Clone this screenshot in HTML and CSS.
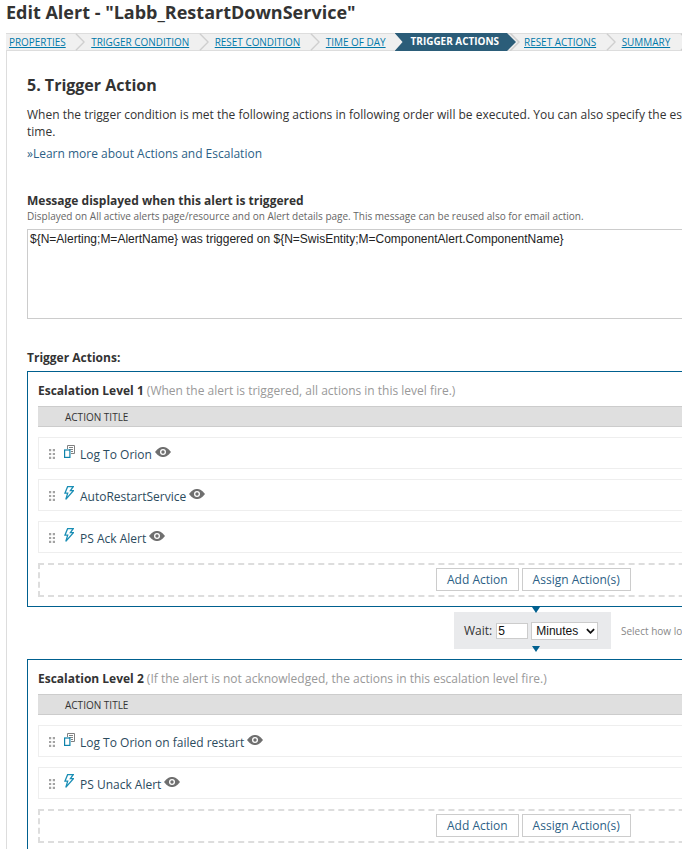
FILE: index.html
```html
<!DOCTYPE html>
<html lang="en">
<head>
<meta charset="utf-8">
<title>Edit Alert</title>
<link rel="stylesheet" href="styles.css">
</head>
<body>
<svg class="defs" width="0" height="0" aria-hidden="true">
  <defs>
    <symbol id="i-chev" viewBox="0 0 11 18"><path d="M1 0 L10 9 L1 18" fill="none" stroke="#cfcfcf" stroke-width="1.5"/></symbol>
    <symbol id="i-log" viewBox="0 0 11 13"><path d="M3.500 4V.5h7v8H7M5 2.500h4M5 4.500h4M7 6.500h2" fill="none" stroke="#808080" stroke-width="1"/><rect x=".6" y="5" width="5.300" height="7.400" fill="#fff" stroke="#0f83ab" stroke-width="1.200"/></symbol>
    <symbol id="i-bolt" viewBox="0 0 10 14"><path d="M3.600.7H9.200L6.400 4.700H9.400L1.800 13.400L3.700 7.200H.9Z" fill="none" stroke="#1a8eb5" stroke-width="1.300"/></symbol>
    <symbol id="i-eye" viewBox="0 0 16 10"><path d="M0 5C3 1 5.500 0 8 0s5 1 8 5c-3 4-5.500 5-8 5S3 9 0 5Z" fill="#6f6f6f"/><circle cx="8" cy="5" r="3" fill="#fff"/><circle cx="8" cy="5" r="1.700" fill="#6f6f6f"/></symbol>
    <symbol id="i-grip" viewBox="0 0 6 10"><path d="M0 0h2.200v2.200H0zM3.800 0H6v2.200H3.800zM0 3.900h2.200v2.200H0zM3.800 3.900H6v2.200H3.800zM0 7.800h2.200V10H0zM3.800 7.800H6V10H3.800z" fill="#a3a3a3"/></symbol>
  </defs>
</svg>
<div class="page">
  <h1 class="title">Edit Alert - "Labb_RestartDownService"</h1>
  <nav class="steps">
    <a class="step" href="#">Properties</a><svg class="chev"><use href="#i-chev"/></svg>
    <a class="step" href="#">Trigger Condition</a><svg class="chev"><use href="#i-chev"/></svg>
    <a class="step" href="#">Reset Condition</a><svg class="chev"><use href="#i-chev"/></svg>
    <a class="step" href="#">Time of Day</a>
    <span class="step-active">Trigger Actions</span><svg class="chev chev-after"><use href="#i-chev"/></svg>
    <a class="step" href="#">Reset Actions</a><svg class="chev"><use href="#i-chev"/></svg>
    <a class="step" href="#">Summary</a><svg class="chev"><use href="#i-chev"/></svg>
  </nav>
  <main class="panel">
    <h2 class="heading">5. Trigger Action</h2>
    <p class="intro">When the trigger condition is met the following actions in following order will be executed. You can also specify the escalation wait<br>time.</p>
    <p class="learn"><a href="#">»Learn more about Actions and Escalation</a></p>
    <h3 class="label msg-label">Message displayed when this alert is triggered</h3>
    <p class="hint">Displayed on All active alerts page/resource and on Alert details page. This message can be reused also for email action.</p>
    <div class="message">${N=Alerting;M=AlertName} was triggered on ${N=SwisEntity;M=ComponentAlert.ComponentName}</div>
    <h3 class="label actions-label">Trigger Actions:</h3>

    <section class="level">
      <div class="level-title"><b>Escalation Level 1</b> (When the alert is triggered, all actions in this level fire.)</div>
      <div class="col-head">Action Title</div>
      <div class="row"><svg class="grip"><use href="#i-grip"/></svg><svg class="ic-log"><use href="#i-log"/></svg><span class="name">Log To Orion</span><svg class="eye"><use href="#i-eye"/></svg></div>
      <div class="row"><svg class="grip"><use href="#i-grip"/></svg><svg class="ic-bolt"><use href="#i-bolt"/></svg><span class="name">AutoRestartService</span><svg class="eye"><use href="#i-eye"/></svg></div>
      <div class="row"><svg class="grip"><use href="#i-grip"/></svg><svg class="ic-bolt"><use href="#i-bolt"/></svg><span class="name">PS Ack Alert</span><svg class="eye"><use href="#i-eye"/></svg></div>
      <div class="add-zone"><button class="btn">Add Action</button><button class="btn">Assign Action(s)</button></div>
    </section>

    <div class="wait-line">
      <div class="wait">
        <i class="tri tri-top"></i>
        <label class="wait-label">Wait:</label>
        <span class="wait-input">5</span>
        <span class="wait-select">Minutes<svg class="caret" viewBox="0 0 10 6"><path d="M1 1l4 4 4-4" fill="none" stroke="#111" stroke-width="2"/></svg></span>
        <i class="tri tri-bottom"></i>
      </div>
      <span class="wait-hint">Select how long to wait before the next escalation level</span>
    </div>

    <section class="level">
      <div class="level-title"><b>Escalation Level 2</b> (If the alert is not acknowledged, the actions in this escalation level fire.)</div>
      <div class="col-head">Action Title</div>
      <div class="row"><svg class="grip"><use href="#i-grip"/></svg><svg class="ic-log"><use href="#i-log"/></svg><span class="name">Log To Orion on failed restart</span><svg class="eye"><use href="#i-eye"/></svg></div>
      <div class="row"><svg class="grip"><use href="#i-grip"/></svg><svg class="ic-bolt"><use href="#i-bolt"/></svg><span class="name">PS Unack Alert</span><svg class="eye"><use href="#i-eye"/></svg></div>
      <div class="add-zone"><button class="btn">Add Action</button><button class="btn">Assign Action(s)</button></div>
    </section>
  </main>
</div>
</body>
</html>
```
FILE: styles.css
```css
html, body { margin: 0; padding: 0; height: 849px; overflow: hidden; background: #fff; }
body { font-family: "Open Sans", sans-serif; color: #333; }
.defs { position: absolute; }
.page { width: 1000px; padding-left: 6px; }
.title { margin: 0; font-size: 18px; line-height: 24px; font-weight: 700; color: #333; height: 33px; }
.steps { display: flex; align-items: center; height: 16px; background: #f0f0f0; border-top: 1px solid #ddd; border-bottom: 1px solid #ddd; padding-left: 3px; font-size: 9.950px; }
.step { color: #0079aa; text-transform: uppercase; line-height: 13px; white-space: nowrap; }
.chev { width: 10px; height: 18px; margin: -1px 6px -1px 9.500px; flex: none; }
.chev-after { width: 11px; margin: -1px 4px -1px -7px; }
.step-active { position: relative; z-index: 1; margin: -1px 0 -1px 9px; height: 18px; line-height: 17px; padding: 0 17px 0 16px; background: #2b5d79; color: #fff; font-weight: 700; text-transform: uppercase; clip-path: polygon(0 0, calc(100% - 9px) 0, 100% 50%, calc(100% - 9px) 100%, 0 100%, 8px 50%); white-space: nowrap; }
.panel { border-left: 1px solid #ddd; padding: 23px 0 0 20px; }
.heading { margin: 0; font-size: 16px; line-height: 22px; font-weight: 700; color: #333; }
.intro { margin: 10px 0 0; font-size: 12px; line-height: 17px; white-space: nowrap; }
.learn { margin: 5px 0 0; font-size: 12px; line-height: 17px; }
.learn a { color: #2c5f86; text-decoration: none; }
.label { margin: 0; font-size: 12px; line-height: 16px; font-weight: 700; color: #333; }
.msg-label { margin-top: 31px; }
.hint { margin: 1px 0 0; font-size: 10px; line-height: 13px; color: #666; }
.message { margin-top: 6px; height: 84px; border: 1px solid #ccc; padding: 2px; font-family: "Liberation Sans", sans-serif; font-size: 12px; line-height: 14px; color: #222; }
.actions-label { margin-top: 31px; }
.level { margin-top: 5px; border: 1px solid #00608f; padding: 10px 10px 9px; box-sizing: border-box; }
.wait-line + .level { margin-top: 0; }
.level-title { font-size: 12px; line-height: 17px; color: #999; }
.level-title b { color: #333; }
.col-head { margin-top: 7px; height: 19px; line-height: 21px; background: #dfdfdf; border-top: 1px solid #ccc; border-bottom: 1px solid #ccc; padding-left: 27px; font-size: 10px; text-transform: uppercase; color: #333; }
.row { display: flex; align-items: flex-start; height: 30px; margin-top: 10px; border: 1px solid #eee; }
.grip { width: 6px; height: 10px; margin: 11px 0 0 10px; flex: none; }
.ic-log { width: 11px; height: 13px; margin: 7px 0 0 9px; flex: none; }
.ic-bolt { width: 10px; height: 14px; margin: 6px 1px 0 9px; flex: none; }
.name { margin: 8px 0 0 5px; font-size: 12px; line-height: 17px; color: #2c4b5e; white-space: nowrap; }
.eye { width: 16px; height: 10px; margin: 9px 0 0 3px; flex: none; }
.add-zone { display: flex; gap: 3px; margin-top: 10px; height: 27px; border: 2px dashed #ddd; padding-left: 396px; padding-top: 3px; }
.btn { height: 23px; padding: 0 10px; background: #fff; border: 1px solid #ccc; font-family: "Open Sans", sans-serif; font-size: 12px; color: #2c5f86; white-space: nowrap; }
.wait-line { display: flex; align-items: center; margin: 5px 0 10px 427px; height: 37px; }
.wait { position: relative; display: flex; align-items: center; width: 157px; height: 37px; box-sizing: border-box; padding-left: 10px; background: #e9eaec; flex: none; }
.wait-label { font-size: 12px; color: #333; }
.wait-input { width: 29px; height: 14px; margin-left: 4px; border: 1px solid #ccc; background: #fff; padding-left: 1px; font-family: "Liberation Sans", sans-serif; font-size: 12px; line-height: 14px; color: #111; }
.wait-select { display: flex; align-items: center; justify-content: space-between; width: 59px; height: 16px; margin-left: 3px; padding: 0 2px 0 4px; border: 1px solid #ccc; background: #fff; font-family: "Liberation Sans", sans-serif; font-size: 12px; color: #111; }
.caret { width: 9px; height: 6px; }
.tri { position: absolute; left: 78px; width: 0; height: 0; border-left: 4px solid transparent; border-right: 4px solid transparent; border-top: 6px solid #00608f; }
.tri-top { top: -5px; }
.tri-bottom { top: 34px; }
.wait-hint { margin-left: 10px; font-size: 10px; color: #888; white-space: nowrap; }
```
